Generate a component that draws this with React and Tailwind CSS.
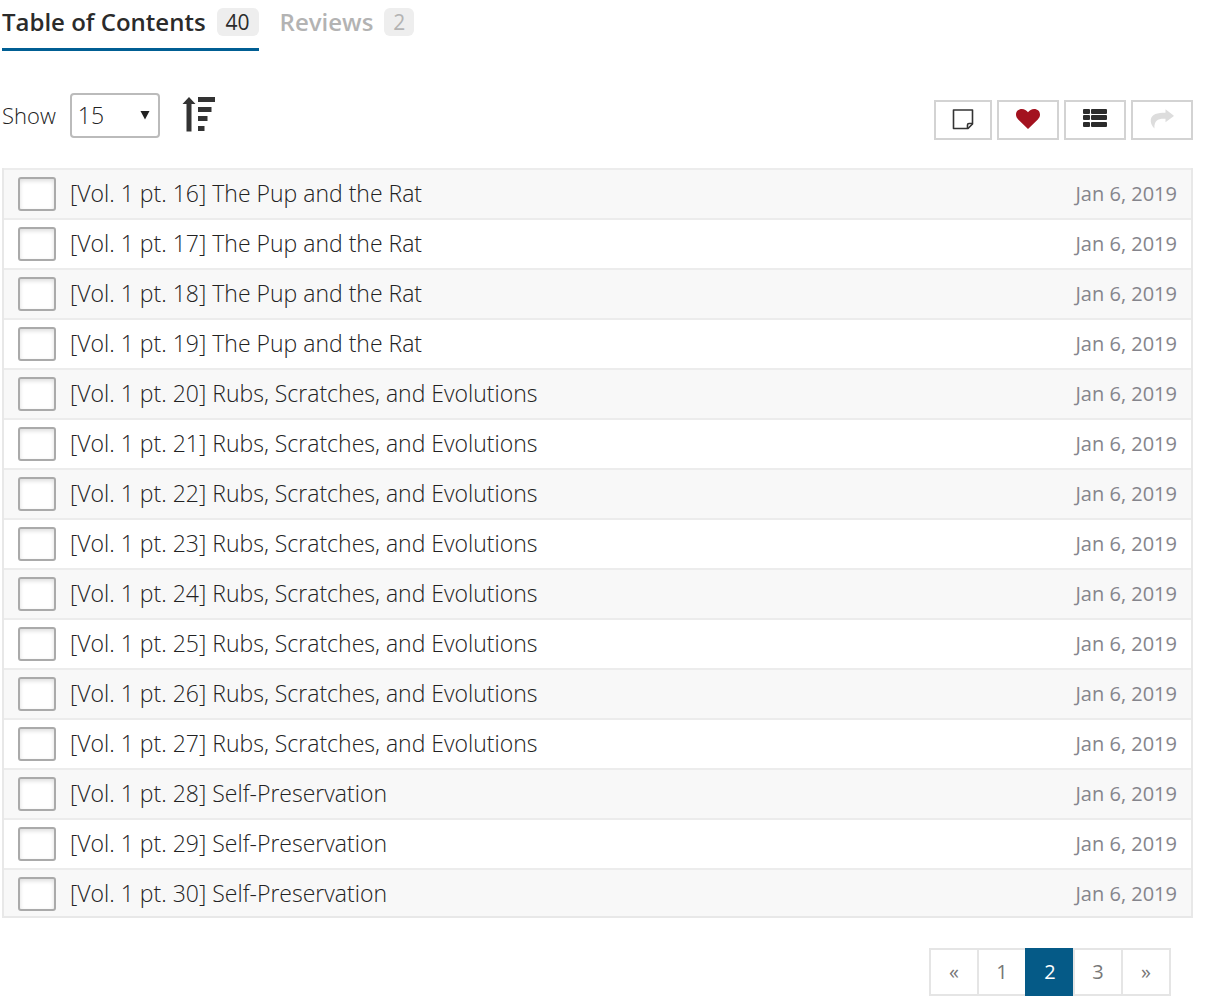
import { useState } from 'react'
import clsx from 'clsx'

const groups = [
  { title: 'The Pup and the Rat', from: 16, to: 19 },
  { title: 'Rubs, Scratches, and Evolutions', from: 20, to: 27 },
  { title: 'Self-Preservation', from: 28, to: 30 },
]

const chapters = groups.flatMap(({ title, from, to }) =>
  Array.from({ length: to - from + 1 }, (_, i) => ({
    id: from + i,
    title: `[Vol. 1 pt. ${from + i}] ${title}`,
    date: 'Jan 6, 2019',
  }))
)

const pages = ['«', '1', '2', '3', '»']

function SortIcon() {
  return (
    <svg width="34" height="36" viewBox="0 0 34 36" fill="currentColor" aria-hidden="true">
      <path d="M7 0 13.500 7H9.500V34.500H4.500V7H0.500Z" />
      <path d="M16 0H33V5H16ZM16 10H29.500V15H16ZM16 19H25.500V24H16ZM16 29H22.500V34H16Z" />
    </svg>
  )
}

function NoteIcon() {
  return (
    <svg width="24" height="24" viewBox="0 0 24 24" fill="none" stroke="currentColor" strokeWidth="1.6" strokeLinejoin="round" aria-hidden="true">
      <path d="M2.500 2H21.500V16L17 20.500H2.500Z" />
      <path d="M21.500 15.500H18Q16.500 15.500 16.500 17V20.500" />
    </svg>
  )
}

function HeartIcon() {
  return (
    <svg width="24" height="24" viewBox="0 0 24 24" fill="currentColor" aria-hidden="true">
      <path d="M12 21 2.200 11.500C0.800 10.200 0 8.600 0 6.600 0 3.200 2.400 1 5.900 1 8.400 1 10.600 2.500 12 4.200 13.400 2.500 15.600 1 18.100 1 21.600 1 24 3.200 24 6.600 24 8.600 23.200 10.200 21.800 11.500Z" />
    </svg>
  )
}

function ListIcon() {
  return (
    <svg width="24" height="24" viewBox="0 0 24 24" fill="currentColor" aria-hidden="true">
      {[1, 7, 14].map((y) => (
        <g key={y}>
          <rect x="0" y={y} width="7" height="5" rx="1" />
          <rect x="8" y={y} width="16" height="5" rx="1" />
        </g>
      ))}
    </svg>
  )
}

function ShareIcon() {
  return (
    <svg width="24" height="24" viewBox="0 0 24 24" fill="currentColor" aria-hidden="true">
      <path d="M15.500 1.200 23.600 7.400Q24 7.800 23.600 8.200L15.500 14.300V10.800C8 10.500 4.200 12 4.400 20.500 1.500 17.500 0.400 14.500 0.800 11.500 1.600 6.200 7.500 4.800 15.500 4.800Z" />
    </svg>
  )
}

const actions = [
  { name: 'Notes', icon: <NoteIcon />, className: 'w-[58px] text-[#333]' },
  { name: 'Favorite', icon: <HeartIcon />, className: 'w-[62px] text-[#a3121f]' },
  { name: 'List view', icon: <ListIcon />, className: 'w-[62px] text-[#2b2b2b]' },
  { name: 'Share', icon: <ShareIcon />, className: 'w-[62px] text-[#ddd]' },
]

function Tab({ label, count, active, onClick }) {
  return (
    <button
      type="button"
      role="tab"
      aria-selected={active}
      onClick={onClick}
      className={clsx(
        'flex items-start gap-[11px] border-b-[3px] pt-2 pb-3',
        active ? 'border-[#005e93] text-[#2b2b2b]' : 'border-transparent text-[#b3b3b3]'
      )}
    >
      <span className="text-2xl leading-7 font-semibold">{label}</span>
      <span className="rounded-md bg-[#eee] px-[9px] text-[21px] leading-7">{count}</span>
    </button>
  )
}

export default function App() {
  const [tab, setTab] = useState('contents')
  const [page, setPage] = useState('2')

  return (
    <main className="bg-white pr-[15px] pb-1 pl-0.5 font-['Open_Sans',sans-serif] text-[#222]">
      <div role="tablist" className="flex gap-[21px]">
        <Tab label="Table of Contents" count={40} active={tab === 'contents'} onClick={() => setTab('contents')} />
        <Tab label="Reviews" count={2} active={tab === 'reviews'} onClick={() => setTab('reviews')} />
      </div>

      <div className="mt-[42px] flex items-start justify-between">
        <div className="flex h-[45px] items-center">
          <label htmlFor="show" className="text-[22px] font-light">Show</label>
          <div className="relative ml-3.5">
            <select
              id="show"
              defaultValue="15"
              className="block h-[45px] w-[90px] appearance-none rounded border-2 border-[#bbb] bg-white pl-1.5 text-[23px] font-light"
            >
              <option>15</option>
              <option>30</option>
              <option>50</option>
            </select>
            <svg width="10" height="10" viewBox="0 0 10 10" fill="currentColor" className="pointer-events-none absolute top-[17px] right-2.5" aria-hidden="true">
              <path d="M0.500 1H9.500L5 9.500Z" />
            </svg>
          </div>
          <button type="button" aria-label="Sort order" className="ml-[22px] pb-0.5 text-[#333]">
            <SortIcon />
          </button>
        </div>
        <div className="mt-[7px] flex gap-[5px]">
          {actions.map(({ name, icon, className }) => (
            <button
              key={name}
              type="button"
              aria-label={name}
              className={clsx('flex h-10 items-center justify-center border-2 border-[#d3d3d3] bg-white', className)}
            >
              {icon}
            </button>
          ))}
        </div>
      </div>

      <ul className="mt-7 border-x-2 border-b-2 border-[#e8e8e8]">
        {chapters.map(({ id, title, date }) => (
          <li key={id} className="flex h-[50px] items-start border-t-2 border-[#ececec] px-3.5 pt-[7px] odd:bg-[#f8f8f8] last:h-12">
            <input
              id={`part-${id}`}
              type="checkbox"
              className="h-[34px] w-[38px] appearance-none rounded-[3px] border-2 border-[#aaa] bg-white shadow-[inset_0_2px_4px_#ddd] checked:bg-[#005e93]"
            />
            <label htmlFor={`part-${id}`} className="ml-3.5 flex-1 text-[23px] leading-8 font-light">
              {title}
            </label>
            <time className="text-xl leading-[34px] text-[#85858c]">{date}</time>
          </li>
        ))}
      </ul>

      <nav aria-label="Pages" className="mt-[30px] mr-[22px] flex justify-end">
        {pages.map((p) => (
          <a
            key={p}
            href={`#page-${p}`}
            aria-current={p === page ? 'page' : undefined}
            onClick={() => /\d/.test(p) && setPage(p)}
            className={clsx(
              '-ml-0.5 flex h-12 w-[50px] items-center justify-center border-2 text-xl',
              p === page ? 'border-[#055a87] bg-[#055a87] text-white' : 'border-[#e5e5e5] bg-white text-[#777]'
            )}
          >
            {p}
          </a>
        ))}
      </nav>
    </main>
  )
}
